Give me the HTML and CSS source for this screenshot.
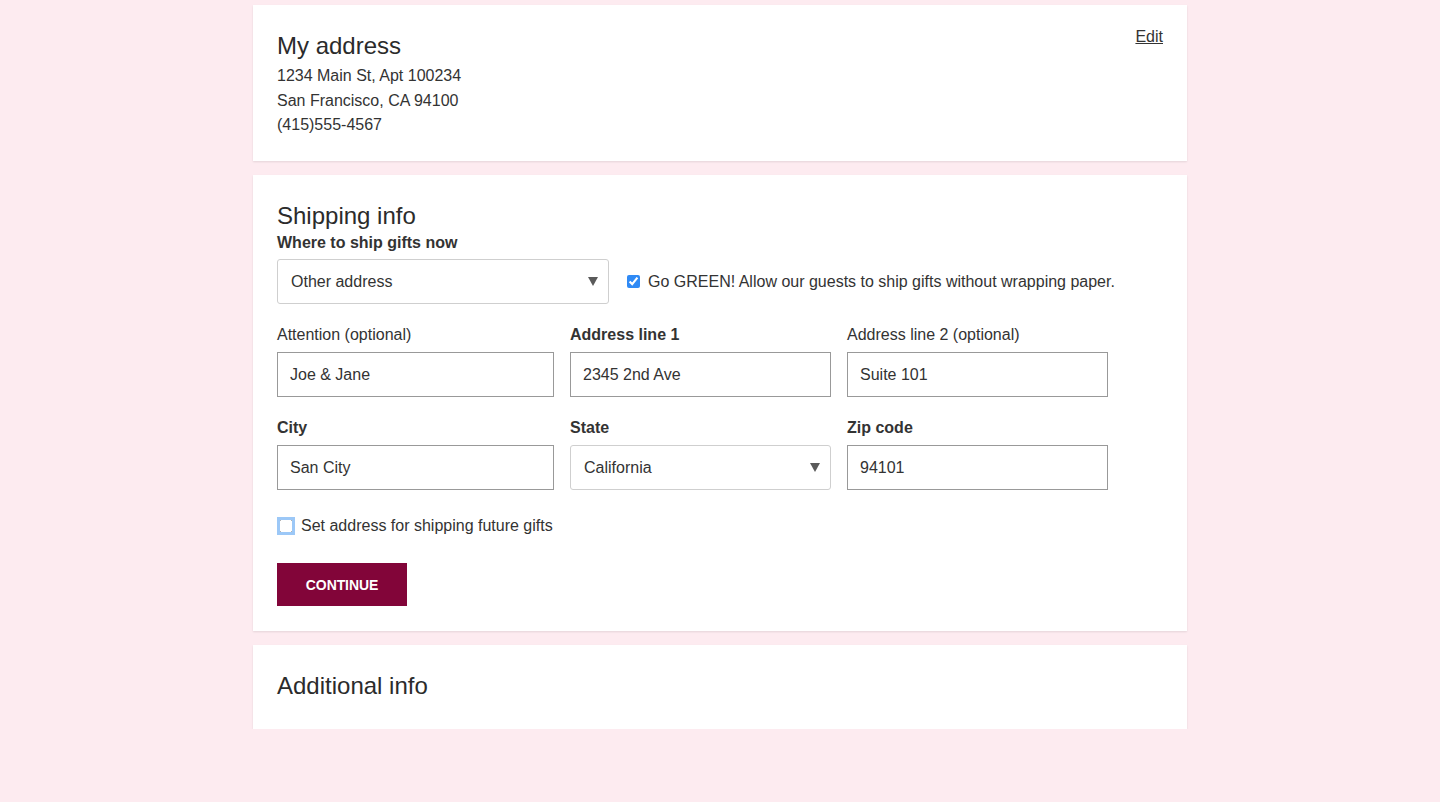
FILE: index.html
```html
<!DOCTYPE html>
<html lang="en">
<head>
    <meta charset="UTF-8">
    <title>Shipping info</title>
    <link rel="stylesheet" href="styles.css">
</head>
<body>
<main class="wrap">

    <section class="card first">
        <div class="card-head">
            <h2 class="card-title">My address</h2>
            <a class="edit" href="#">Edit</a>
        </div>
        <p class="addr">1234 Main St, Apt 100234</p>
        <p class="addr">San Francisco, CA 94100</p>
        <p class="addr">(415)555-4567</p>
    </section>

    <section class="card">
        <h2 class="card-title">Shipping info</h2>
        <label class="lbl bold">Where to ship gifts now</label>
        <div class="ship-row">
            <div class="select wide">
                <span>Other address</span>
                <span class="arrow"></span>
            </div>
            <label class="check">
                <input type="checkbox" checked>
                Go GREEN! Allow our guests to ship gifts without wrapping paper.
            </label>
        </div>

        <div class="fields">
            <div class="field">
                <label class="lbl">Attention (optional)</label>
                <input class="txt" type="text" value="Joe &amp; Jane">
            </div>
            <div class="field">
                <label class="lbl bold">Address line 1</label>
                <input class="txt" type="text" value="2345 2nd Ave">
            </div>
            <div class="field">
                <label class="lbl">Address line 2 (optional)</label>
                <input class="txt" type="text" value="Suite 101">
            </div>
            <div class="field">
                <label class="lbl bold">City</label>
                <input class="txt" type="text" value="San City">
            </div>
            <div class="field">
                <label class="lbl bold">State</label>
                <div class="select">
                    <span>California</span>
                    <span class="arrow"></span>
                </div>
            </div>
            <div class="field">
                <label class="lbl bold">Zip code</label>
                <input class="txt" type="text" value="94101">
            </div>
        </div>

        <label class="check future">
            <input type="checkbox" class="focused">
            Set address for shipping future gifts
        </label>

        <button class="btn">CONTINUE</button>
    </section>

    <section class="card">
        <h2 class="card-title">Additional info</h2>
    </section>

</main>
</body>
</html>
```

FILE: styles.css
```css
* {
    box-sizing: border-box;
}

body {
    margin: 0;
    background-color: #fdebf0;
    font-family: "Liberation Sans", Arial, sans-serif;
    font-size: 16px;
    color: #333;
}

.wrap {
    width: 934px;
    margin: 0 auto;
    padding-top: 5px;
    display: flex;
    flex-direction: column;
    gap: 14px;
}

.card {
    background: #fff;
    padding: 27px 24px 25px;
    box-shadow: 0 1px 2px rgba(0, 0, 0, 0.1);
}

.card.first {
    padding-bottom: 23.5px;
}

.card-head {
    display: flex;
    justify-content: space-between;
    align-items: flex-start;
}

.card-title {
    margin: 0 0 5px;
    font-size: 24px;
    line-height: 27px;
    font-weight: normal;
    color: #2b2b2b;
}

.edit {
    margin-top: -5px;
    color: #333;
    line-height: 20px;
}

.addr {
    margin: 0;
    line-height: 24.5px;
}

.lbl {
    display: block;
    line-height: 18px;
    margin-bottom: 7px;
}

.bold {
    font-weight: bold;
}

.ship-row {
    display: flex;
    align-items: center;
    gap: 18px;
    margin-bottom: 22px;
}

.select {
    height: 45px;
    border: 1px solid #cfcfcf;
    border-radius: 3px;
    padding: 0 13px;
    display: flex;
    align-items: center;
    justify-content: space-between;
}

.select.wide {
    width: 332px;
}

.arrow {
    width: 0;
    height: 0;
    border-left: 5px solid transparent;
    border-right: 5px solid transparent;
    border-top: 9px solid #5a5a5a;
    margin-right: -3px;
}

.check {
    display: flex;
    align-items: center;
    gap: 8px;
    line-height: 20px;
}

.check input {
    margin: 0;
    width: 13px;
    height: 13px;
    accent-color: #2f8af5;
}

.check input.focused {
    width: 14px;
    height: 14px;
    outline: 3px solid #9cc8f7;
    outline-offset: -1px;
    border-radius: 3px;
}

.fields {
    display: grid;
    grid-template-columns: 277px 261px 261px;
    column-gap: 16px;
    row-gap: 22px;
}

.field .lbl {
    margin-bottom: 8px;
}

.txt {
    display: block;
    width: 100%;
    height: 45px;
    border: 1px solid #999;
    padding: 0 12px;
    font-family: inherit;
    font-size: 16px;
    color: #333;
    outline: none;
}

.future {
    margin: 26px 0 0 2px;
}

.btn {
    display: block;
    margin-top: 27px;
    width: 130px;
    height: 43px;
    border: none;
    background-color: #820539;
    color: #fff;
    font-family: inherit;
    font-weight: bold;
    font-size: 14px;
    letter-spacing: -0.1px;
    cursor: pointer;
}
```
